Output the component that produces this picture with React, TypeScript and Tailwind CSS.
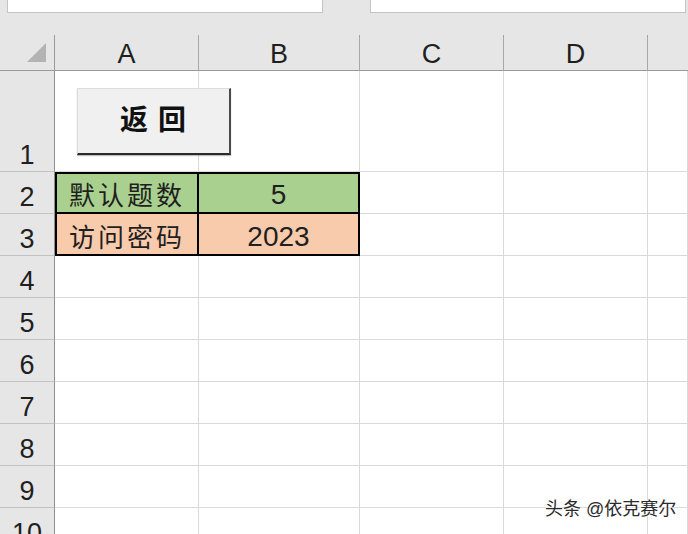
const COLS = ["A", "B", "C", "D", ""];
const ROWS = [1, 2, 3, 4, 5, 6, 7, 8, 9, 10];
const FONT = { fontFamily: '"Liberation Sans", "Noto Sans CJK SC", sans-serif' };

const rowHeight = (r: number) => (r === 1 ? "h-[101px]" : "h-[42px]");

const cellClass = (r: number, c: number) => {
  // thick box around A2:B3
  if ((r === 2 || r === 3) && (c === 0 || c === 1)) {
    const bg = r === 2 ? "bg-[#a9d08e]" : "bg-[#f8cbad]";
    return `${bg} border-black border-r-2 border-b-2 ${c === 0 ? "border-l-2" : ""} ${
      r === 2 ? "border-t-2" : ""
    }`;
  }
  return "bg-white border-[#d9d9d9] border-r border-b";
};

const CELL_TEXT: Record<string, string> = {
  "2-0": "默认题数",
  "2-1": "5",
  "3-0": "访问密码",
  "3-1": "2023",
};

export default function App() {
  return (
    <div
      className="relative h-[534px] w-[688px] overflow-hidden bg-[#e6e6e6] text-[#1f1f1f]"
      style={FONT}
    >
      {/* formula bar area */}
      <div className="flex h-[35px] items-start">
        <div className="ml-[7px] h-[13px] w-[316px] border-x border-b border-[#c4c4c4] bg-white" />
        <div className="ml-[47px] h-[13px] w-[316px] border-x border-b border-[#c4c4c4] bg-white" />
      </div>

      {/* column headers */}
      <div className="flex h-[36px]">
        <div className="relative w-[55px] border-r border-b border-[#9a9a9a]">
          <svg className="absolute left-[27px] top-[8px]" width="20" height="20" viewBox="0 0 20 20">
            <polygon points="19,0 19,19 0,19" fill="#b3b3b3" />
          </svg>
        </div>
        {COLS.map((c, i) => (
          <div
            key={i}
            className={`flex items-center justify-center border-b border-[#9a9a9a] text-[27px] ${
              i === 1 ? "w-[161px]" : i === 4 ? "flex-1" : "w-[144px]"
            } ${i < 4 ? "border-r border-r-[#a8a8a8]" : ""}`}
          >
            <span className="mt-[3px]">{c}</span>
          </div>
        ))}
      </div>

      {/* rows */}
      {ROWS.map((r) => (
        <div key={r} className={`flex ${rowHeight(r)}`}>
          <div className="flex w-[55px] items-end justify-center border-r border-b border-r-[#8f8f8f] border-b-[#c2c2c2] pb-[2px] text-[27px] leading-none">
            {r}
          </div>
          {COLS.map((_, c) => (
            <div
              key={c}
              className={`flex items-end justify-center pb-[3px] text-[26px] leading-none ${cellClass(r, c)} ${
                c === 1 ? "w-[161px]" : c === 4 ? "flex-1" : "w-[144px]"
              }`}
            >
              {CELL_TEXT[`${r}-${c}`] && (
                <span className={c === 0 ? "tracking-[3px]" : "text-[28px]"}>
                  {CELL_TEXT[`${r}-${c}`]}
                </span>
              )}
            </div>
          ))}
        </div>
      ))}

      {/* form button */}
      <div className="absolute left-[77px] top-[88px] flex h-[67px] w-[154px] items-center justify-center border-t border-l border-b-2 border-r-2 border-t-[#dcdcdc] border-l-[#dcdcdc] border-b-[#2a2a2a] border-r-[#4a4a4a] bg-[#f0f0f0] shadow-[0_1px_1px_rgba(0,0,0,0.25)]">
        <span className="text-[28px] font-bold leading-none tracking-[1px] text-[#111]">返 回</span>
      </div>

      {/* watermark */}
      <div
        className="absolute left-[545px] top-[500px] text-[18px] leading-none text-[#2b2b2b]"
        style={{ textShadow: "0 0 2px #fff, 0 0 2px #fff" }}
      >
        头条 @依克赛尔
      </div>
    </div>
  );
}
